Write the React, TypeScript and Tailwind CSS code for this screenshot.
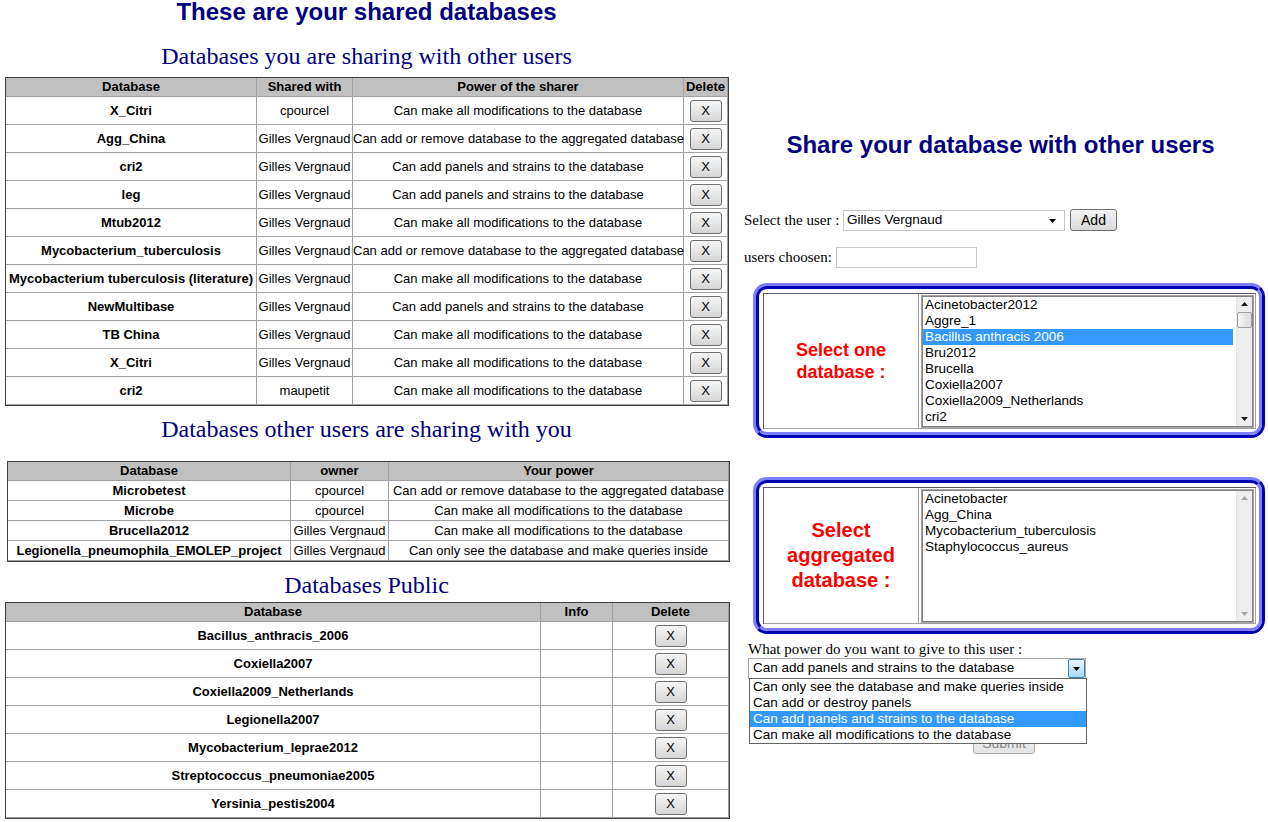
import React from "react";

const S = "font-['Liberation_Sans',Arial,sans-serif]";
const SERIF = "font-['Liberation_Serif','Times_New_Roman',serif]";

function XBtn() {
  return (
    <div className="mx-auto flex h-[22px] w-[32px] items-center justify-center rounded-[3px] border border-[#707070] bg-linear-to-b from-[#f6f6f6] to-[#d6d6d6] text-[13px] leading-none text-black">
      X
    </div>
  );
}

const ALL = "Can make all modifications to the database";
const AGG = "Can add or remove database to the aggregated database";
const PAN = "Can add panels and strains to the database";
const GV = "Gilles Vergnaud";

const shared: [string, string, string][] = [
  ["X_Citri", "cpourcel", ALL],
  ["Agg_China", GV, AGG],
  ["cri2", GV, PAN],
  ["leg", GV, PAN],
  ["Mtub2012", GV, ALL],
  ["Mycobacterium_tuberculosis", GV, AGG],
  ["Mycobacterium tuberculosis (literature)", GV, ALL],
  ["NewMultibase", GV, PAN],
  ["TB China", GV, ALL],
  ["X_Citri", GV, ALL],
  ["cri2", "maupetit", ALL],
];

const others: [string, string, string][] = [
  ["Microbetest", "cpourcel", AGG],
  ["Microbe", "cpourcel", ALL],
  ["Brucella2012", GV, ALL],
  ["Legionella_pneumophila_EMOLEP_project", GV, "Can only see the database and make queries inside"],
];

const publicDbs = [
  "Bacillus_anthracis_2006",
  "Coxiella2007",
  "Coxiella2009_Netherlands",
  "Legionella2007",
  "Mycobacterium_leprae2012",
  "Streptococcus_pneumoniae2005",
  "Yersinia_pestis2004",
];

const TH = "border-r border-b border-[#a0a0a0] bg-[#c0c0c0] p-0 text-center font-bold";
const TD = "border-r border-b border-[#a0a0a0] p-0 text-center";

function Tri({ color, up }: { color: string; up?: boolean }) {
  return (
    <svg width="7" height="4" viewBox="0 0 7 4">
      <path d={up ? "M0 4H7L3.5 0Z" : "M0 0H7L3.5 4Z"} fill={color} />
    </svg>
  );
}

function Frame({ children, last }: { children: React.ReactNode; last?: boolean }) {
  return (
    <div className="ml-[20px] w-[512px] rounded-[14px] border-[3px] border-t-[#7d7dff] border-r-[#0000b4] border-b-[#0000b4] border-l-[#7d7dff]">
      <div
        className={
          last
            ? "rounded-[11px] border-[3px] border-t-[#0000b4] border-r-[#7d7dff] border-b-[#7d7dff] border-l-[#0000b4] pt-[4px] pr-[3px] pb-[4px] pl-[4px]"
            : "rounded-[11px] border-[3px] border-t-[#0000b4] border-r-[#7d7dff] border-b-[#7d7dff] border-l-[#0000b4] pt-[4px] pr-[3px] pb-[3px] pl-[4px]"
        }
      >
        {children}
      </div>
    </div>
  );
}

function ListBox({
  items,
  selected,
  active,
  hClass,
}: {
  items: string[];
  selected?: number;
  active: boolean;
  hClass: string;
}) {
  return (
    <div className={`${hClass} flex overflow-hidden border border-[#a3a3a3]`}>
      <div className="flex flex-1 overflow-hidden border border-[#828282]">
        <div className="flex-1 overflow-hidden pr-[3px]">
          {items.map((it, i) => (
            <div
              key={i}
              className={
                i === selected
                  ? "h-[16px] bg-[#3399ff] pl-[2px] text-[13.5px] leading-[16px] whitespace-nowrap text-white"
                  : "h-[16px] pl-[2px] text-[13.5px] leading-[16px] whitespace-nowrap text-black"
              }
            >
              {it}
            </div>
          ))}
        </div>
        <div className="relative w-[16px] border-l border-[#e6e6e6] bg-[#eeeeee]">
          <div className="absolute top-[5px] left-[4px]">
            <Tri color={active ? "#1a1a1a" : "#a8a8a8"} up />
          </div>
          {active && (
            <div className="absolute top-[15px] left-[0px] h-[16px] w-[15px] rounded-[2px] border border-[#9a9a9a] bg-linear-to-r from-[#f6f6f6] to-[#dcdcdc]" />
          )}
          <div className="absolute bottom-[5px] left-[4px]">
            <Tri color={active ? "#1a1a1a" : "#a8a8a8"} />
          </div>
        </div>
      </div>
    </div>
  );
}

export default function App() {
  return (
    <div className={`${S} flex min-h-[822px] w-[1268px] bg-white text-black`}>
      {/* LEFT */}
      <div className="w-[733px] shrink-0">
        <h1 className="text-center text-[24px] leading-[24px] font-bold text-[#000080]">
          These are your shared databases
        </h1>
        <h2 className={`${SERIF} mt-[18px] text-center text-[24px] leading-[28px] text-[#000080]`}>
          Databases you are sharing with other users
        </h2>
        <table className="mt-[7px] ml-[5px] w-[724px] table-fixed border-separate border-spacing-0 border border-[#404040] text-[13px] leading-[16px]">
          <colgroup>
            <col className="w-[251px]" />
            <col className="w-[96px]" />
            <col className="w-[331px]" />
            <col className="w-[44px]" />
          </colgroup>
          <thead>
            <tr className="h-[19px]">
              <th className={TH}>Database</th>
              <th className={TH}>Shared with</th>
              <th className={TH}>Power of the sharer</th>
              <th className={TH}>Delete</th>
            </tr>
          </thead>
          <tbody>
            {shared.map((r, i) => (
              <tr key={i} className="h-[28px]">
                <td className={`${TD} font-bold whitespace-nowrap`}>{r[0]}</td>
                <td className={`${TD} whitespace-nowrap`}>{r[1]}</td>
                <td className={`${TD} whitespace-nowrap`}>{r[2]}</td>
                <td className={TD}>
                  <XBtn />
                </td>
              </tr>
            ))}
          </tbody>
        </table>

        <h2 className={`${SERIF} mt-[9px] text-center text-[24px] leading-[28px] text-[#000080]`}>
          Databases other users are sharing with you
        </h2>
        <table className="mt-[18px] ml-[7px] w-[723px] table-fixed border-separate border-spacing-0 border border-[#404040] text-[13px] leading-[16px]">
          <colgroup>
            <col className="w-[283px]" />
            <col className="w-[98px]" />
            <col className="w-[340px]" />
          </colgroup>
          <thead>
            <tr className="h-[19px]">
              <th className={TH}>Database</th>
              <th className={TH}>owner</th>
              <th className={TH}>Your power</th>
            </tr>
          </thead>
          <tbody>
            {others.map((r, i) => (
              <tr key={i} className="h-[20px]">
                <td className={`${TD} font-bold whitespace-nowrap`}>{r[0]}</td>
                <td className={`${TD} whitespace-nowrap`}>{r[1]}</td>
                <td className={`${TD} whitespace-nowrap`}>{r[2]}</td>
              </tr>
            ))}
          </tbody>
        </table>

        <h2 className={`${SERIF} mt-[9px] text-center text-[24px] leading-[28px] text-[#000080]`}>
          Databases Public
        </h2>
        <table className="mt-[3px] ml-[5px] w-[725px] table-fixed border-separate border-spacing-0 border border-[#404040] text-[13px] leading-[16px]">
          <colgroup>
            <col className="w-[535px]" />
            <col className="w-[72px]" />
            <col className="w-[116px]" />
          </colgroup>
          <thead>
            <tr className="h-[19px]">
              <th className={TH}>Database</th>
              <th className={TH}>Info</th>
              <th className={TH}>Delete</th>
            </tr>
          </thead>
          <tbody>
            {publicDbs.map((d, i) => (
              <tr key={i} className="h-[28px]">
                <td className={`${TD} font-bold`}>{d}</td>
                <td className={TD}></td>
                <td className={TD}>
                  <XBtn />
                </td>
              </tr>
            ))}
          </tbody>
        </table>
      </div>

      {/* RIGHT */}
      <div className="flex-1">
        <h1 className="mt-[133px] text-center text-[24px] leading-[24px] font-bold text-[#000080]">
          Share your database with other users
        </h1>

        <div className="mt-[52px] ml-[11px] flex h-[22px] items-center">
          <span className={`${SERIF} w-[99px] text-[15px] whitespace-nowrap`}>Select the user :</span>
          <div className="relative flex h-[21px] w-[222px] items-center border border-[#c6c6c6] pl-[3px] text-[13.5px]">
            Gilles Vergnaud
            <div className="absolute top-[8px] right-[8px] flex">
              <Tri color="#000" />
            </div>
          </div>
          <div className="ml-[5px] flex h-[22px] w-[47px] items-center justify-center rounded-[3px] border border-[#707070] bg-linear-to-b from-[#f4f4f4] to-[#d9d9d9] text-[14px]">
            Add
          </div>
        </div>

        <div className="mt-[16px] ml-[11px] flex h-[21px] items-center">
          <span className={`${SERIF} w-[92px] text-[15px] whitespace-nowrap`}>users choosen:</span>
          <div className="h-[21px] w-[141px] border border-[#c5c8cf]" />
        </div>

        <div className="mt-[15px]">
          <Frame>
            <div className="flex h-[136px] border-t border-l border-[#5a5a5a]">
              <div className="flex w-[155px] items-center justify-center border-r border-b border-[#a0a0a0] text-center text-[18px] leading-[22px] font-bold text-[#ff0000]">
                Select one
                <br />
                database :
              </div>
              <div className="flex-1 border-r border-b border-[#a0a0a0] pt-[1px] pr-[1px] pl-[2px]">
                <ListBox
                  hClass="h-[133px]"
                  active
                  selected={2}
                  items={[
                    "Acinetobacter2012",
                    "Aggre_1",
                    "Bacillus anthracis 2006",
                    "Bru2012",
                    "Brucella",
                    "Coxiella2007",
                    "Coxiella2009_Netherlands",
                    "cri2",
                  ]}
                />
              </div>
            </div>
          </Frame>
        </div>

        <div className="mt-[39px]">
          <Frame last>
            <div className="flex h-[137px] border-t border-l border-[#5a5a5a]">
              <div className="flex w-[155px] items-center justify-center border-r border-b border-[#a0a0a0] text-center text-[20px] leading-[25px] font-bold text-[#ff0000]">
                Select
                <br />
                aggregated
                <br />
                database :
              </div>
              <div className="flex-1 border-r border-b border-[#a0a0a0] pt-[1px] pr-[1px] pl-[2px]">
                <ListBox
                  hClass="h-[134px]"
                  active={false}
                  items={["Acinetobacter", "Agg_China", "Mycobacterium_tuberculosis", "Staphylococcus_aureus"]}
                />
              </div>
            </div>
          </Frame>
        </div>

        <div className={`${SERIF} mt-[6px] ml-[15px] text-[15px] leading-[18px]`}>
          What power do you want to give to this user :
        </div>
        <div className="relative ml-[15px] w-[338px]">
          <div className="flex h-[21px] items-center border border-[#a9a9a9] pl-[4px] text-[13.5px] whitespace-nowrap">
            Can add panels and strains to the database
          </div>
          <div className="absolute top-[1px] right-[1px] flex h-[19px] w-[17px] items-center justify-center rounded-[2px] border border-[#3c7fb1] bg-linear-to-b from-[#eaf6fd] to-[#a9d9f5]">
            <Tri color="#000" />
          </div>
          <div className="absolute top-[20px] left-[1px] z-10 w-[338px] border border-[#646464] bg-white text-[13.5px] leading-[16px]">
            <div className="h-[16px] pl-[3px] whitespace-nowrap">Can only see the database and make queries inside</div>
            <div className="h-[16px] pl-[3px] whitespace-nowrap">Can add or destroy panels</div>
            <div className="h-[16px] bg-[#3399ff] pl-[3px] whitespace-nowrap text-white">
              Can add panels and strains to the database
            </div>
            <div className="h-[16px] pl-[3px] whitespace-nowrap">Can make all modifications to the database</div>
          </div>
        </div>
        <div className="mt-[53px] ml-[240px] flex h-[22px] w-[62px] items-center justify-center rounded-[3px] border border-[#adadad] bg-linear-to-b from-[#f4f4f4] to-[#e2e2e2] text-[14px] text-[#8a8a8a]">
          Submit
        </div>
      </div>
    </div>
  );
}
